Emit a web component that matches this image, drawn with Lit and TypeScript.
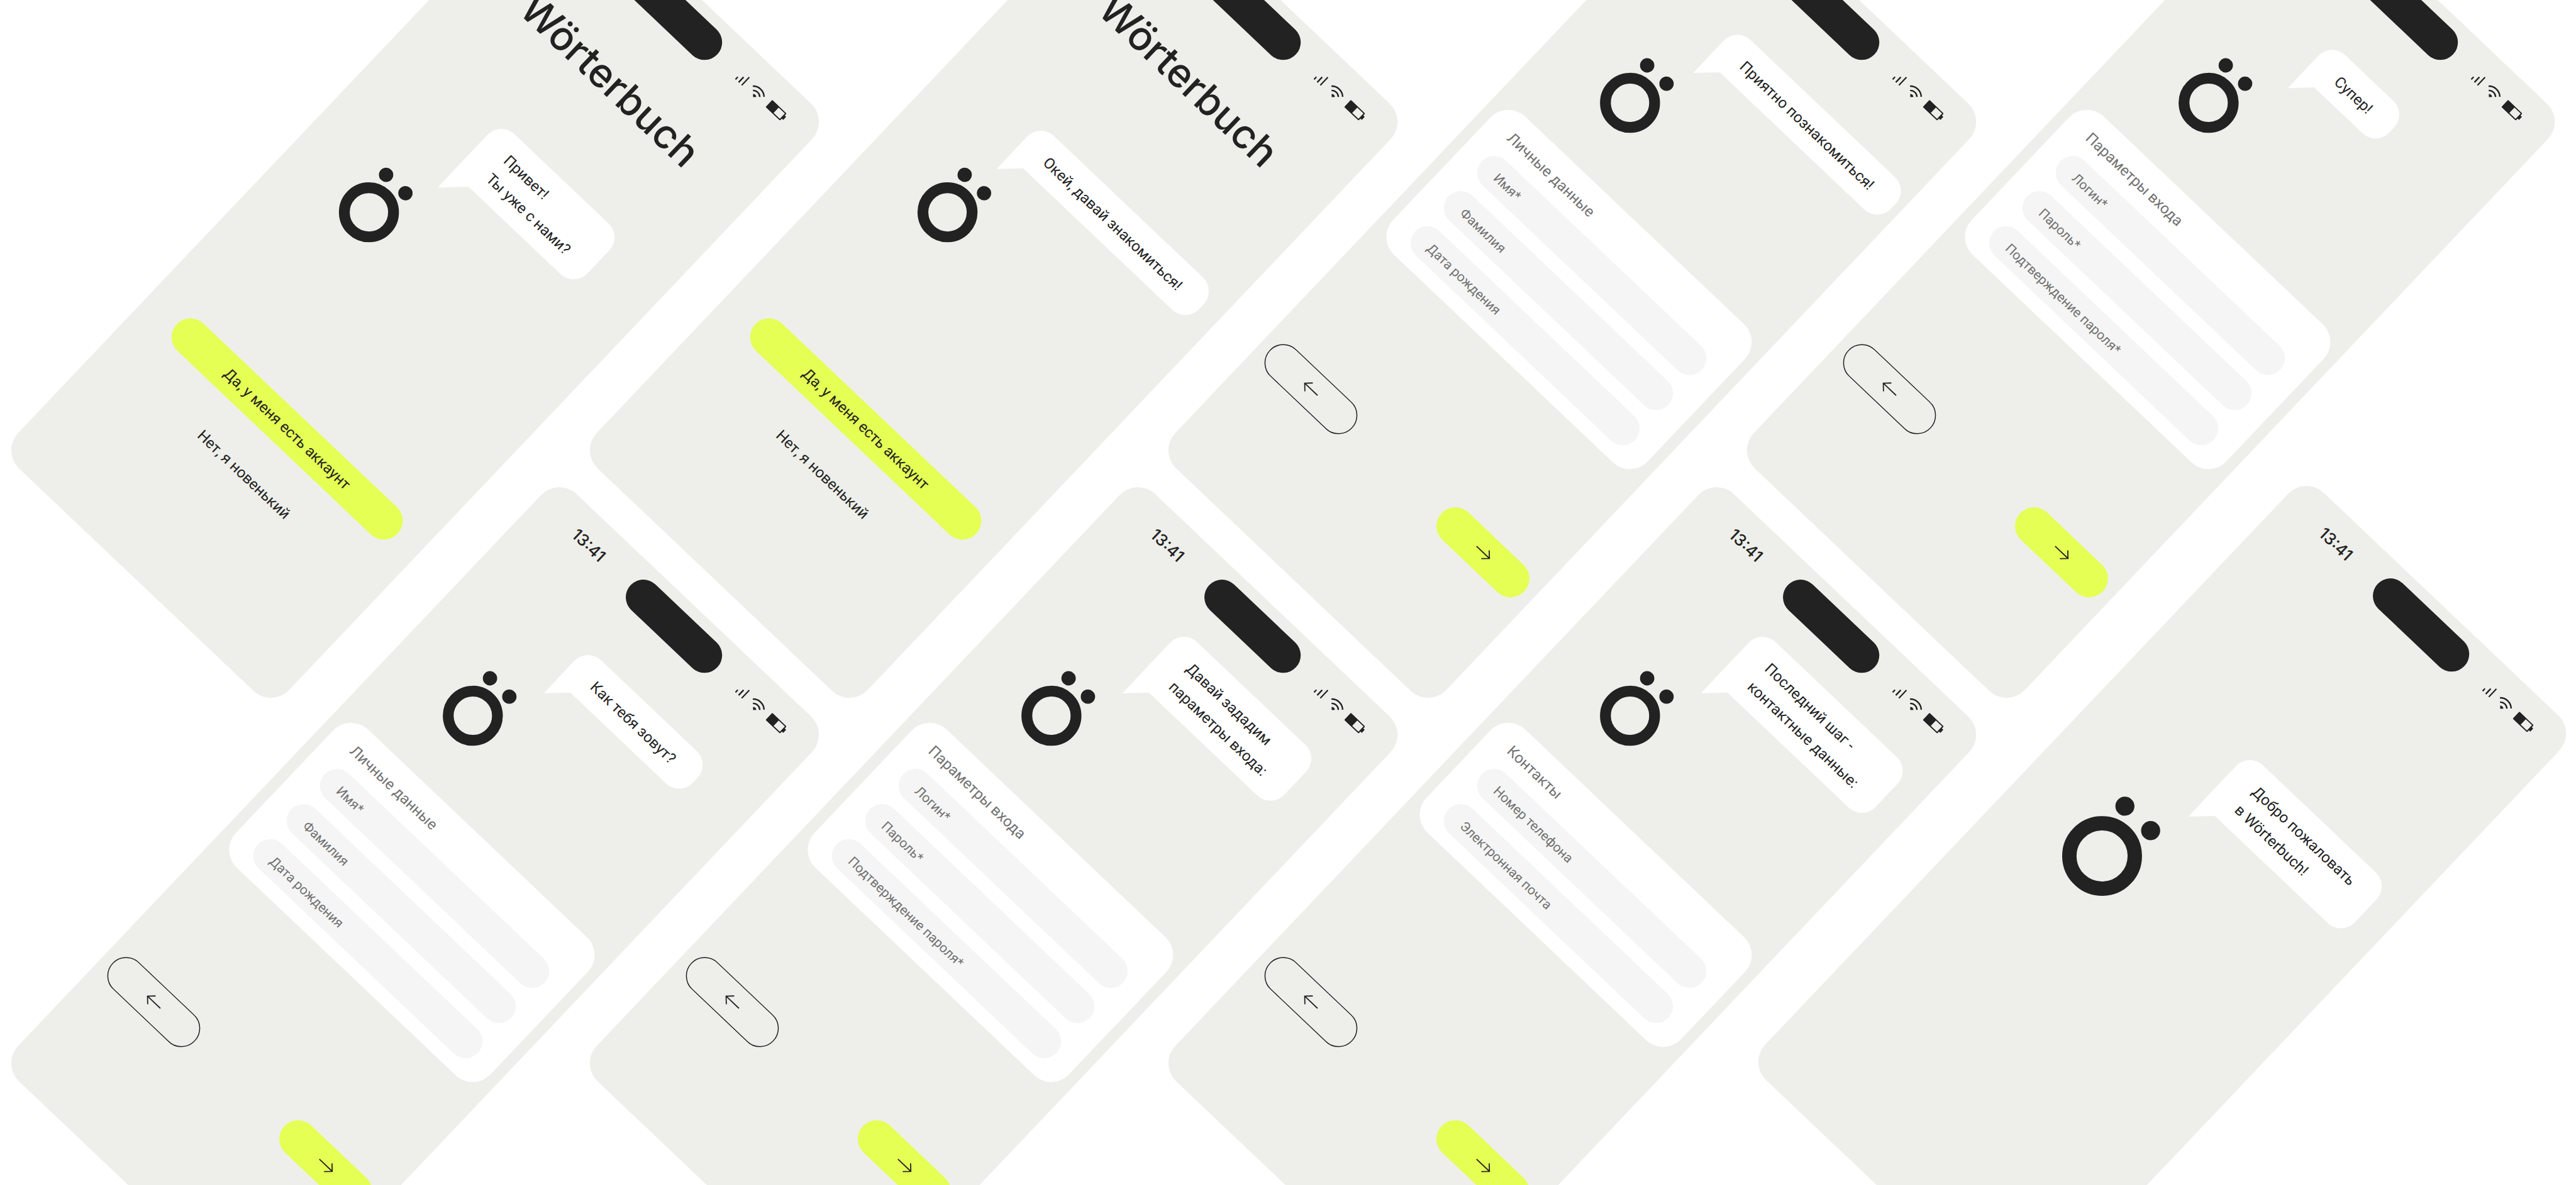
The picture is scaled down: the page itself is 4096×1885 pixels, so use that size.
import { LitElement, html, css, nothing } from "lit";
import { customElement, property } from "lit/decorators.js";
import { classMap } from "lit/directives/class-map.js";

type Field = { label: string; type: string; name: string };

type Screen = {
  kind: "welcome" | "form" | "final";
  bubble: string[];
  indent: string;
  longTail?: boolean;
  title?: string;
  fields?: Field[];
};

const personal: Field[] = [
  { label: "Имя*", type: "text", name: "first-name" },
  { label: "Фамилия", type: "text", name: "last-name" },
  { label: "Дата рождения", type: "text", name: "birthday" },
];

const credentials: Field[] = [
  { label: "Логин*", type: "text", name: "login" },
  { label: "Пароль*", type: "password", name: "password" },
  { label: "Подтверждение пароля*", type: "password", name: "password-repeat" },
];

const contacts: Field[] = [
  { label: "Номер телефона", type: "tel", name: "phone" },
  { label: "Электронная почта", type: "email", name: "email" },
];

const screens: Screen[] = [
  { kind: "welcome", bubble: ["Привет!", "Ты уже с нами?"], indent: "indent-3", longTail: true },
  { kind: "welcome", bubble: ["Окей, давай знакомиться!"], indent: "indent-1" },
  {
    kind: "form",
    bubble: ["Приятно познакомиться!"],
    indent: "indent-2",
    title: "Личные данные",
    fields: personal,
  },
  {
    kind: "form",
    bubble: ["Супер!"],
    indent: "indent-5",
    title: "Параметры входа",
    fields: credentials,
  },
  {
    kind: "form",
    bubble: ["Как тебя зовут?"],
    indent: "indent-4",
    title: "Личные данные",
    fields: personal,
  },
  {
    kind: "form",
    bubble: ["Давай зададим", "параметры входа:"],
    indent: "indent-4",
    title: "Параметры входа",
    fields: credentials,
  },
  {
    kind: "form",
    bubble: ["Последний шаг -", "контактные данные:"],
    indent: "indent-4",
    title: "Контакты",
    fields: contacts,
  },
  { kind: "final", bubble: ["Добро пожаловать", "в Wörterbuch!"], indent: "indent-5" },
];

const signalIcon = html`<svg class="signal" viewBox="0 0 16 18" aria-hidden="true">
  <path d="M1.2 12.4V18M8.1 6.3V18M15 0.2V18" stroke="currentColor" stroke-width="2.4" fill="none" />
</svg>`;

const wifiIcon = html`<svg class="wifi" viewBox="0 0 26 19" aria-hidden="true">
  <path d="M13 19 9.46 15.46A5 5 0 0 1 16.54 15.46Z" fill="currentColor" />
  <path
    d="M5.5 11.5A10.6 10.6 0 0 1 20.5 11.5M0.7 6.7A17.4 17.4 0 0 1 25.3 6.7"
    fill="none"
    stroke="currentColor"
    stroke-width="2.4"
  />
</svg>`;

const batteryIcon = html`<svg class="battery" viewBox="0 0 35 16" aria-hidden="true">
  <rect x="1" y="1.2" width="29.6" height="13.6" rx="0.6" fill="none" stroke="currentColor" stroke-width="2" />
  <rect x="1" y="1" width="15" height="14" fill="currentColor" />
  <rect x="31" y="4.6" width="3.8" height="6.8" rx="0.6" fill="currentColor" />
</svg>`;

const backIcon = html`<svg class="outline" viewBox="0 0 181 60" aria-hidden="true">
  <g fill="none" stroke="currentColor">
    <rect x="0.8" y="0.8" width="179.4" height="58.4" rx="29.2" stroke-width="1.5" />
    <path d="M105 30H76.9M85.9 20.9 76.8 30l9.1 9.1" stroke-width="1.8" />
  </g>
</svg>`;

const forwardIcon = html`<svg class="arrow" viewBox="0 0 30 20" aria-hidden="true">
  <path d="M0.5 10H28.6M19.6 0.9 28.7 10l-9.1 9.1" fill="none" stroke="currentColor" stroke-width="1.8" />
</svg>`;

const logo = html`<svg class="logo" viewBox="0 0 96 121" role="img" aria-label="Ö">
  <circle cx="48" cy="73.4" r="39.1" fill="none" stroke="currentColor" stroke-width="17.2" />
  <circle cx="26.8" cy="11.4" r="11.4" fill="currentColor" />
  <circle cx="69.2" cy="11.4" r="11.4" fill="currentColor" />
</svg>`;

@customElement("phone-screen")
export class PhoneScreen extends LitElement {
  @property({ attribute: false }) screen!: Screen;

  static styles = css`
    :host {
      box-sizing: border-box;
      display: flex;
      flex-direction: column;
      width: 594px;
      height: 1288px;
      padding: 18px 18px 209px;
      border-radius: 40px;
      background: #eeefea;
      color: #222222;
      font-family: Roboto, "Liberation Sans", sans-serif;
      font-size: 24px;
      font-weight: 450;
      line-height: 40px;
    }
    .status {
      display: grid;
      grid-template-columns: 1fr 190px 1fr;
      align-items: center;
      flex: none;
      height: 56px;
    }
    .time {
      text-align: center;
      font-family: Inter, "Liberation Sans", sans-serif;
      font-size: 26px;
    }
    .island {
      height: 56px;
      border-radius: 28px;
      background: #222222;
    }
    .indicators {
      display: flex;
      align-items: center;
      justify-content: center;
      gap: 12px;
      padding-left: 10px;
    }
    .signal {
      width: 16px;
      height: 18px;
    }
    .wifi {
      width: 26px;
      height: 19px;
    }
    .battery {
      width: 35px;
      height: 16px;
    }
    .brand {
      margin: 79px 0 0;
      text-align: center;
      font-family: Inter, "Liberation Sans", sans-serif;
      font-size: 64px;
      font-weight: 500;
      line-height: 80px;
    }
    .speech {
      display: flex;
      align-items: flex-end;
      height: 162px;
    }
    .welcome .speech {
      height: 243px;
    }
    .final .speech {
      height: 418px;
    }
    .bubble {
      position: relative;
      margin: 0;
      padding: 17px 46px 14px 47px;
      border-radius: 30px 30px 30px 0;
      background: #ffffff;
      white-space: nowrap;
    }
    .bubble::after {
      content: "";
      position: absolute;
      top: calc(100% - 1px);
      left: 0;
      width: 31px;
      height: 31px;
      background: #ffffff;
      clip-path: polygon(0 0, 100% 0, 0 100%);
    }
    .long-tail {
      margin-bottom: 5px;
    }
    .long-tail::after {
      width: 36px;
      height: 36px;
    }
    .line {
      display: block;
    }
    .indent-1 {
      margin-left: 154px;
    }
    .indent-2 {
      margin-left: 185px;
    }
    .indent-3 {
      margin-left: 197px;
    }
    .indent-4 {
      margin-left: 202px;
    }
    .indent-5 {
      margin-left: 220px;
    }
    .logo {
      display: block;
      width: 96px;
      height: 121px;
      margin: 60px 0 0 97px;
    }
    .final .logo {
      width: 128px;
      height: 161px;
      margin-top: 72px;
      margin-left: 100px;
    }
    .card {
      margin: 83px 0 0;
      padding: 6px 38px 23px;
      border-radius: 39px;
      background: #ffffff;
      color: #717171;
    }
    .card-title {
      margin: 0;
      padding-left: 4px;
      font-size: 24px;
      font-weight: 450;
      line-height: 66px;
    }
    .fields {
      display: grid;
      grid-template-columns: minmax(0, 1fr);
      gap: 23px;
    }
    .field {
      box-sizing: border-box;
      display: flex;
      align-items: center;
      height: 54px;
      padding: 3px 32px 0;
      border-radius: 27px;
      background: #f5f5f5;
      font-size: 21px;
      font-weight: 400;
      white-space: nowrap;
    }
    .input {
      flex: 1;
      min-width: 0;
      padding: 0 0 0 12px;
      border: 0;
      outline: 0;
      background: transparent;
      color: #222222;
      font: inherit;
    }
    .nav {
      display: flex;
      justify-content: space-between;
      margin-top: auto;
    }
    .choices {
      display: grid;
      justify-items: center;
      gap: 40px;
      margin-top: auto;
      padding-left: 18px;
    }
    .button {
      box-sizing: border-box;
      display: flex;
      align-items: center;
      justify-content: center;
      height: 60px;
      padding: 0;
      border: 0;
      border-radius: 30px;
      background: transparent;
      color: inherit;
      font: inherit;
      cursor: pointer;
    }
    .primary {
      background: #e5ff54;
    }
    .wide {
      width: 484px;
    }
    .plain {
      padding: 0 24px;
    }
    .step {
      width: 181px;
    }
    .outline {
      width: 181px;
      height: 60px;
    }
    .arrow {
      width: 30px;
      height: 20px;
    }
    .content {
      display: contents;
    }
  `;

  private renderCard(title: string, fields: Field[]) {
    return html`<form class="card">
      <h2 class="card-title">${title}</h2>
      <div class="fields">
        ${fields.map(
          (f) => html`<label class="field">
            <span>${f.label}</span>
            <input class="input" type=${f.type} name=${f.name} />
          </label>`
        )}
      </div>
    </form>`;
  }

  render() {
    const s = this.screen;
    const bubbleClasses = { bubble: true, "long-tail": !!s.longTail, [s.indent]: true };
    return html`<div class="content ${s.kind}">
      <div class="status">
        <span class="time">13:41</span>
        <span class="island"></span>
        <span class="indicators">${signalIcon}${wifiIcon}${batteryIcon}</span>
      </div>
      ${s.kind === "welcome" ? html`<h1 class="brand">Wörterbuch</h1>` : nothing}
      <div class="speech">
        <p class=${classMap(bubbleClasses)}>
          ${s.bubble.map((line) => html`<span class="line">${line}</span>`)}
        </p>
      </div>
      ${logo}
      ${s.kind === "form" ? this.renderCard(s.title ?? "", s.fields ?? []) : nothing}
      ${s.kind === "form"
        ? html`<div class="nav">
            <button class="button step" type="button" aria-label="Назад">${backIcon}</button>
            <button class="button step primary" type="button" aria-label="Далее">${forwardIcon}</button>
          </div>`
        : nothing}
      ${s.kind === "welcome"
        ? html`<div class="choices">
            <button class="button wide primary" type="button">Да, у меня есть аккаунт</button>
            <button class="button plain" type="button">Нет, я новенький</button>
          </div>`
        : nothing}
    </div>`;
  }
}

@customElement("app-root")
export class AppRoot extends LitElement {
  static styles = css`
    :host {
      display: block;
    }
    .board {
      box-sizing: border-box;
      display: grid;
      grid-template-columns: repeat(4, 1fr);
      grid-auto-rows: 975px;
      align-content: center;
      place-items: center;
      height: 100vh;
      padding: 0 216px 0 200px;
      overflow: hidden;
      background: #ffffff;
    }
    .phone {
      transform: rotate(43.5deg);
    }
    .last {
      margin: 0 -18px 4px 18px;
    }
  `;

  render() {
    return html`<main class="board">
      ${screens.map(
        (s) => html`<phone-screen
          class=${classMap({ phone: true, last: s.kind === "final" })}
          .screen=${s}
        ></phone-screen>`
      )}
    </main>`;
  }
}
